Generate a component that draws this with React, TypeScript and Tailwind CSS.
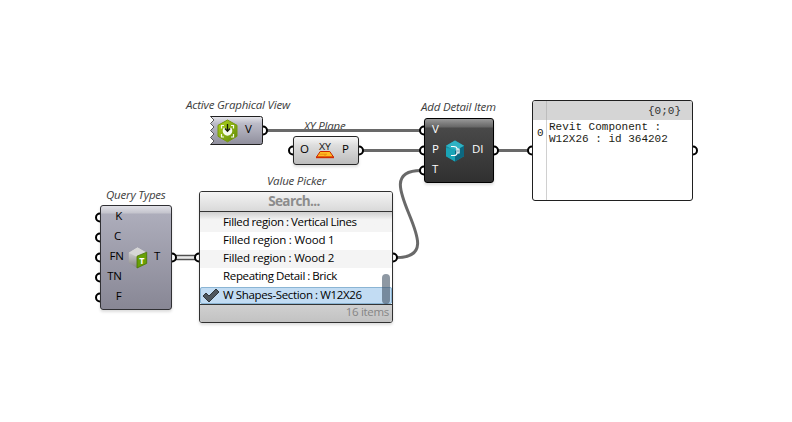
import React from "react";

const FONT = "font-['Open_Sans','Noto_Sans',sans-serif]";

function Caption({ text, className }: { text: string; className: string }) {
  return (
    <div className={`absolute whitespace-nowrap text-[11.5px] leading-4 italic tracking-[-0.2px] text-[#3c3c3c] ${className}`}>{text}</div>
  );
}

function Grip({ x, y, side }: { x: number; y: number; side: "in" | "out" }) {
  const d = side === "in" ? `M${x} ${y - 4} a4 4 0 0 0 0 8` : `M${x} ${y - 4} a4 4 0 0 1 0 8`;
  return <path d={d} fill="#fff" stroke="#000" strokeWidth="2" />;
}

function Wires() {
  return (
    <svg className="absolute inset-0" width="792" height="422" fill="none">
      <g stroke="#696969" strokeWidth="3">
        <path d="M267 130.5H421" />
        <path d="M362 150.5H421" />
        <path d="M497 150.5H529" />
        <path d="M397 257.5C457 257.5 361 170.5 421 170.5" />
      </g>
      <path d="M175 257.5H196" stroke="#e9e9e9" strokeWidth="2" />
      <path d="M175 255.5H196M175 259.5H196" stroke="#505050" strokeWidth="1.4" />
      <Grip x={263} y={130.5} side="out" />
      <Grip x={293} y={150.5} side="in" />
      <Grip x={359} y={150.5} side="out" />
      <Grip x={424} y={130.5} side="in" />
      <Grip x={424} y={150.5} side="in" />
      <Grip x={424} y={170.5} side="in" />
      <Grip x={494} y={150.5} side="out" />
      <Grip x={532} y={150.5} side="in" />
      <Grip x={693} y={150.5} side="out" />
      <Grip x={100} y={217.5} side="in" />
      <Grip x={100} y={237.5} side="in" />
      <Grip x={100} y={257.5} side="in" />
      <Grip x={100} y={277.5} side="in" />
      <Grip x={100} y={297.5} side="in" />
      <Grip x={172} y={257.5} side="out" />
      <Grip x={199} y={257.5} side="in" />
      <Grip x={393} y={257.5} side="out" />
    </svg>
  );
}

function ViewIcon() {
  return (
    <svg width="21" height="24" viewBox="0 0 21 24" fill="none">
      <defs>
        <linearGradient id="lime" x1="0" y1="0" x2="1" y2="1">
          <stop stopColor="#b1d51c" />
          <stop offset="1" stopColor="#5f8908" />
        </linearGradient>
      </defs>
      <path d="M10.5 1L20 6.3V17.3L10.5 22.8L1 17.3V6.3Z" fill="url(#lime)" stroke="#77960e" />
      <path d="M4.5 9.5V6.5H7M14 6.5H16.5V9.5M16.5 15V18H14M7 18H4.5V15" stroke="#f7faee" strokeWidth="1.2" />
      <path d="M7 8.6A4.8 4.8 0 1 0 14 8.6L10.5 11Z" fill="#f7faee" />
      <path d="M10.5 5V12M7.9 9.5L10.5 12.2L13.1 9.5" stroke="#141b05" strokeWidth="1.3" />
    </svg>
  );
}

function PlaneIcon() {
  return (
    <svg className="overflow-visible" width="20" height="18" viewBox="0 0 20 18" fill="none">
      <text x="4" y="8" fontFamily="Open Sans, sans-serif" fontSize="9.5" fontWeight="500" fill="#151515" textLength="12" lengthAdjust="spacingAndGlyphs">XY</text>
      <path d="M5.2 9.5H14.8L18.5 15H1.5Z" fill="#ffbd24" stroke="#ca2500" />
      <path d="M1 15.5H19" stroke="#d12c00" strokeWidth="1.4" />
      <path d="M4.5 12.2H12M10 12.2V14.5" stroke="#ef8c10" />
    </svg>
  );
}

function DetailIcon() {
  return (
    <svg width="20" height="22" viewBox="0 0 20 22" fill="none">
      <path d="M10 .5L19 5.7V16.2L10 21.5L1 16.2V5.7Z" fill="#168ba0" />
      <path d="M10 .5L19 5.7L10 11L1 5.7Z" fill="#2fb2c3" />
      <path d="M1 8L10 9V21.5L1 16.2Z" fill="#1aa4b6" />
      <path d="M10 11L19 6V16.2L10 21.5Z" fill="#0c6881" />
      <path d="M6 6.5H8.5Q12 6.5 12 9V13Q12 15.5 8.5 15.5H6M12 9H14V13H12" stroke="#fff" strokeWidth="1.2" />
    </svg>
  );
}

function TypesIcon() {
  return (
    <svg width="20" height="22" viewBox="0 0 20 22" fill="none">
      <defs>
        <linearGradient id="cubeGray" x1="0" y1="0" x2="0" y2="1">
          <stop stopColor="#e4e4e4" />
          <stop offset="1" stopColor="#858585" />
        </linearGradient>
      </defs>
      <path d="M9.5 .6L18.7 5.8L9.5 10.2V21L.8 16V5.8Z" fill="url(#cubeGray)" />
      <path d="M9.5 .6L18.7 5.8L9.5 10.2L.8 5.8Z" fill="#d6d6d6" />
      <path d="M9 9.2L18.7 5.2V16.4L9 21Z" fill="#68a005" stroke="#477403" strokeWidth=".8" />
      <text x="11.2" y="16.8" fontFamily="Open Sans, sans-serif" fontSize="9" fontWeight="700" fill="#fff">T</text>
    </svg>
  );
}

const rows = [
  { text: "Filled region : Vertical Lines", style: "bg-linear-to-b from-[#cfcfcf] via-[#f4f4f4] via-40% to-[#f4f4f4] h-5 tracking-[-0.34px] [word-spacing:-0.3px]" },
  { text: "Filled region : Wood 1", style: "bg-white h-[18px] pb-0.5 tracking-[-0.18px]" },
  { text: "Filled region : Wood 2", style: "bg-[#f4f4f4] h-[18px] pb-0.5 tracking-[-0.2px]" },
  { text: "Repeating Detail : Brick", style: "bg-white h-[19px] pb-[3px] tracking-[-0.34px] [word-spacing:-0.4px]" },
  { text: "W Shapes-Section : W12X26", style: "bg-[#c2dcf3] h-[17px] pb-0.5 outline outline-1 -outline-offset-1 outline-[#8bb5d4] rounded-[2px] tracking-[-0.34px] [word-spacing:-0.2px]" },
];

export default function App() {
  return (
    <main className={`relative h-[422px] w-[792px] overflow-hidden bg-white text-[11.5px] leading-4 text-black ${FONT}`}>
      <Caption text="Active Graphical View" className="left-[186px] top-[97px]" />
      <Caption text="XY Plane" className="left-[304px] top-[118px]" />
      <Caption text="Add Detail Item" className="left-[421px] top-[99px]" />
      <Caption text="Value Picker" className="left-[267px] top-[173px]" />
      <Caption text="Query Types" className="left-[106px] top-[187px]" />
      <Wires />

      <section className="absolute left-[210px] top-[116px] flex h-[29px] w-[53px] items-center">
        <svg className="absolute inset-0" width="53" height="29" fill="none">
          <defs>
            <linearGradient id="violet" x1="0" y1="0" x2="0" y2="1">
              <stop stopColor="#e7e7ec" />
              <stop offset=".25" stopColor="#bcbcc8" />
              <stop offset="1" stopColor="#8f8e9c" />
            </linearGradient>
          </defs>
          <path d="M.5 .5H50.5Q52.5 .5 52.5 2.5V26.5Q52.5 28.5 50.5 28.5H.5L4 25L.5 21.5L4 18L.5 14.5L4 11L.5 7.5L4 4Z" fill="url(#violet)" />
          <path d="M.5 28.5L4 25L.5 21.5L4 18L.5 14.5L4 11L.5 7.5L4 4L.5 .5" stroke="#555" />
          <path d="M.5 .5H50.5Q52.5 .5 52.5 2.5V26.5Q52.5 28.5 50.5 28.5H.5" stroke="#202020" />
        </svg>
        <div className="relative flex items-center gap-[7px] pl-[7px]"><ViewIcon /><span className="pb-[3px]">V</span></div>
      </section>

      <section className="absolute left-[293px] top-[136px] flex h-[29px] w-[66px] items-center rounded-[3px] border border-[#262626] bg-linear-to-b from-[#f8f8f8] via-[#dedede] via-30% to-[#bcbcbc] pl-1.5 shadow-[0_2px_3px_#0002]">
        <span className="w-[15px] pb-[3px]">O</span>
        <PlaneIcon />
        <span className="pl-[7px] pb-[3px]">P</span>
      </section>

      <section className="absolute left-[424px] top-[118px] flex h-[65px] w-[70px] items-center rounded-[3px] border border-black bg-[linear-gradient(#999_0,#666_8px,#494949_9px,#303030_100%)] text-white shadow-[0_2px_3px_#0002]">
        <div className="flex w-[20px] flex-col gap-1 pl-[7px] pb-[3px]"><span>V</span><span>P</span><span>T</span></div>
        <DetailIcon />
        <span className="pl-[7px] pb-[3px]">DI</span>
      </section>

      <section className="absolute left-[532px] top-[100px] flex h-[101px] w-[161px] flex-col overflow-hidden rounded-[3px] border border-[#202020] bg-white font-['Liberation_Mono',monospace] text-[11px] leading-3 text-[#1c1c14]">
        <header className="flex h-[19px] w-[159px] bg-[#d5d5d5] pr-[11px]">
          <span className="h-full w-[14px] border-r border-[#bdbdbd]" />
          <span className="flex-1 pt-1 text-right text-[#303030]">{"{0;0}"}</span>
        </header>
        <div className="flex flex-1">
          <span className="w-[14px] border-r border-[#d0d0d0] pl-1 pt-[7px]">0</span>
          <div className="pl-0.5 pt-px">Revit Component :<br />W12X26 : id 364202</div>
        </div>
      </section>

      <section className="absolute left-[100px] top-[205px] flex h-[105px] w-[72px] items-center rounded-[3px] border border-[#303034] bg-[linear-gradient(#e1e1e7_0,#c4c4cd_7px,#adadbb_8px,#888795_100%)] shadow-[0_2px_3px_#0002]">
        <div className="flex w-[27px] flex-col items-center gap-1 pb-[3px] pl-1 tracking-[-0.3px]"><span className="pl-1">K</span><span className="pl-0.5">C</span><span>FN</span><span className="-ml-1">TN</span><span className="pl-1">F</span></div>
        <TypesIcon />
        <span className="pl-1.5 pb-[3px]">T</span>
      </section>

      <section className="absolute left-[199px] top-[191px] flex h-[132px] w-[194px] flex-col overflow-hidden rounded-[3px] border border-[#303030] bg-white shadow-[0_2px_3px_#0002]">
        <header className="h-5 border-b border-[#333] bg-linear-to-b from-[#f4f4f4] to-[#d9d9d9] pr-1 text-center text-[13.5px] leading-[19px] font-bold tracking-[-0.6px] text-[#8c8c8c]">Search...</header>
        <div className="flex h-[92px] flex-col">
          {rows.map((row, index) => (
            <div key={row.text} className={`flex shrink-0 items-center whitespace-nowrap ${row.style}`}>
              <span className="w-[23px] pl-0.5">
                {index === 4 && <svg className="relative top-px" width="18" height="15" viewBox="0 0 18 15"><path d="M1 8L4 5L7 8L14 1L17 4L7 14Z" fill="#4e565d" stroke="#30353a" /></svg>}
              </span>
              <span>{row.text}</span>
            </div>
          ))}
        </div>
        <footer className="flex-1 border-t border-[#333] bg-linear-to-b from-[#d0d0d0] to-[#c2c2c2] pr-[3px] text-right leading-[14px] tracking-[-0.3px] text-[#858585]">16 items</footer>
        <div className="absolute bottom-[18px] right-0.5 h-[30px] w-2 rounded bg-[#42536599]" />
      </section>
    </main>
  );
}
